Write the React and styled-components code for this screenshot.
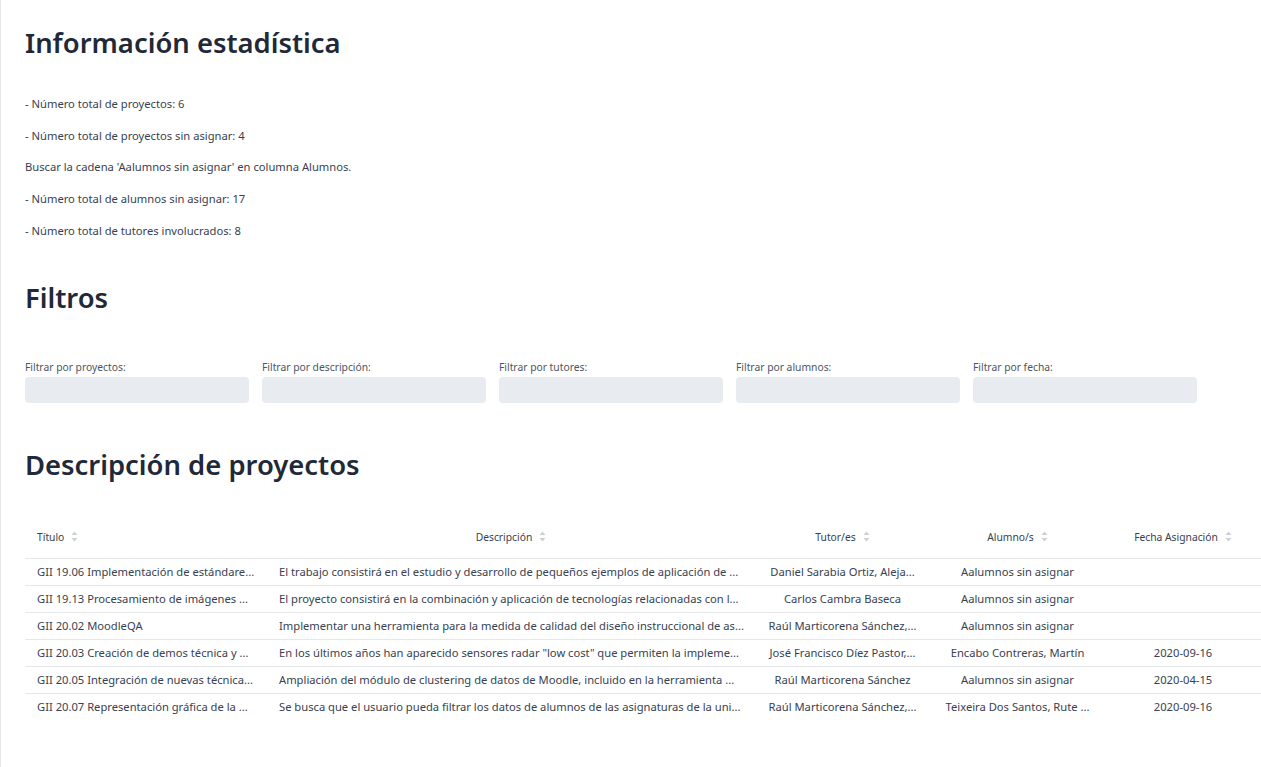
import styled, { createGlobalStyle } from 'styled-components';

const GlobalStyle = createGlobalStyle`
  html, body {
    margin: 0;
    padding: 0;
    background: #ffffff;
  }
  body {
    font-family: "Noto Sans", "Open Sans", sans-serif;
    color: #374151;
  }
`;

const Page = styled.div`
  min-height: 100vh;
  box-sizing: border-box;
  border-left: 1px solid #e8e8e8;
  padding: 26px 0 40px 24px;
  overflow: hidden;
`;

const Heading = styled.h2`
  margin: 0;
  font-size: 27.4px;
  line-height: 34px;
  font-weight: 600;
  color: #1f2937;
  margin-top: ${(p) => p.$top || 0}px;
`;

const StatList = styled.div`
  margin-top: 36px;
  display: flex;
  flex-direction: column;
  gap: 15.7px;
`;

const Stat = styled.p`
  margin: 0;
  font-size: 11.2px;
  line-height: 16px;
  color: #374151;
`;

const FilterGrid = styled.div`
  margin-top: 45px;
  display: grid;
  grid-template-columns: repeat(5, 224px);
  column-gap: 13px;
`;

const Field = styled.label`
  display: flex;
  flex-direction: column;
  gap: 3px;
  font-size: 10.3px;
  line-height: 14px;
  color: #4b5563;
`;

const Input = styled.input`
  box-sizing: border-box;
  height: 26px;
  width: 100%;
  border: none;
  border-radius: 4px;
  background: #e8ebef;
  padding: 0 8px;
  font-family: inherit;
  font-size: 11.2px;
  color: #374151;
  outline: none;
`;

const TableWrap = styled.div`
  margin-top: 34px;
`;

const Table = styled.table`
  width: 1236px;
  table-layout: fixed;
  border-collapse: collapse;
  font-size: 11.2px;
  color: #374151;
`;

const Th = styled.th`
  height: 42px;
  padding: 0 12px;
  border-bottom: 1px solid #e5e7eb;
  font-weight: 400;
  font-size: 10.3px;
  color: #374151;
  text-align: ${(p) => p.$align || 'center'};
  white-space: nowrap;
`;

const Row = styled.tr`
  &:not(:last-child) td {
    border-bottom: 1px solid #e5e7eb;
  }
`;

const Td = styled.td`
  height: 26px;
  padding: 0 ${(p) => (p.$align === 'left' ? '8px 0 12px' : '6px')};
  text-align: ${(p) => p.$align || 'center'};
  white-space: nowrap;
  overflow: hidden;
`;

const HeadLabel = styled.span`
  display: inline-flex;
  align-items: center;
  gap: 7px;
`;

const SortIcon = () => (
  <svg width="7" height="11" viewBox="0 0 7 11">
    <path d="M3.5 0.5 L6.5 4 L0.5 4 Z" fill="#cdd1d6" />
    <path d="M3.5 10.5 L6.5 7 L0.5 7 Z" fill="#cdd1d6" />
  </svg>
);

const columns = [
  { key: 'titulo', label: 'Título', width: 242, align: 'left' },
  { key: 'desc', label: 'Descripción', width: 488, align: 'left', headAlign: 'center' },
  { key: 'tutor', label: 'Tutor/es', width: 175 },
  { key: 'alumno', label: 'Alumno/s', width: 175 },
  { key: 'fecha', label: 'Fecha Asignación', width: 156 },
];

const projects = [
  {
    titulo: 'GII 19.06 Implementación de estándare...',
    desc: 'El trabajo consistirá en el estudio y desarrollo de pequeños ejemplos de aplicación de ...',
    tutor: 'Daniel Sarabia Ortiz, Aleja...',
    alumno: 'Aalumnos sin asignar',
    fecha: '',
  },
  {
    titulo: 'GII 19.13 Procesamiento de imágenes ...',
    desc: 'El proyecto consistirá en la combinación y aplicación de tecnologías relacionadas con l...',
    tutor: 'Carlos Cambra Baseca',
    alumno: 'Aalumnos sin asignar',
    fecha: '',
  },
  {
    titulo: 'GII 20.02 MoodleQA',
    desc: 'Implementar una herramienta para la medida de calidad del diseño instruccional de as...',
    tutor: 'Raúl Marticorena Sánchez,...',
    alumno: 'Aalumnos sin asignar',
    fecha: '',
  },
  {
    titulo: 'GII 20.03 Creación de demos técnica y ...',
    desc: 'En los últimos años han aparecido sensores radar "low cost" que permiten la impleme...',
    tutor: 'José Francisco Díez Pastor,...',
    alumno: 'Encabo Contreras, Martín',
    fecha: '2020-09-16',
  },
  {
    titulo: 'GII 20.05 Integración de nuevas técnica...',
    desc: 'Ampliación del módulo de clustering de datos de Moodle, incluido en la herramienta ...',
    tutor: 'Raúl Marticorena Sánchez',
    alumno: 'Aalumnos sin asignar',
    fecha: '2020-04-15',
  },
  {
    titulo: 'GII 20.07 Representación gráfica de la ...',
    desc: 'Se busca que el usuario pueda filtrar los datos de alumnos de las asignaturas de la uni...',
    tutor: 'Raúl Marticorena Sánchez,...',
    alumno: 'Teixeira Dos Santos, Rute ...',
    fecha: '2020-09-16',
  },
];

const filters = [
  'Filtrar por proyectos:',
  'Filtrar por descripción:',
  'Filtrar por tutores:',
  'Filtrar por alumnos:',
  'Filtrar por fecha:',
];

const App = () => {
  return (
    <>
      <GlobalStyle />
      <Page>
        <Heading>Información estadística</Heading>
        <StatList>
          <Stat>- Número total de proyectos: 6</Stat>
          <Stat>- Número total de proyectos sin asignar: 4</Stat>
          <Stat>Buscar la cadena 'Aalumnos sin asignar' en columna Alumnos.</Stat>
          <Stat>- Número total de alumnos sin asignar: 17</Stat>
          <Stat>- Número total de tutores involucrados: 8</Stat>
        </StatList>

        <Heading $top={42}>Filtros</Heading>
        <FilterGrid>
          {filters.map((f) => (
            <Field key={f}>
              {f}
              <Input type="text" />
            </Field>
          ))}
        </FilterGrid>

        <Heading $top={45}>Descripción de proyectos</Heading>
        <TableWrap>
          <Table>
            <colgroup>
              {columns.map((c) => (
                <col key={c.key} style={{ width: c.width }} />
              ))}
            </colgroup>
            <thead>
              <tr>
                {columns.map((c) => (
                  <Th key={c.key} $align={c.headAlign || c.align}>
                    <HeadLabel>
                      {c.label}
                      <SortIcon />
                    </HeadLabel>
                  </Th>
                ))}
              </tr>
            </thead>
            <tbody>
              {projects.map((p) => (
                <Row key={p.titulo}>
                  {columns.map((c) => (
                    <Td key={c.key} $align={c.align}>
                      {p[c.key]}
                    </Td>
                  ))}
                </Row>
              ))}
            </tbody>
          </Table>
        </TableWrap>
      </Page>
    </>
  );
};

export default App;
